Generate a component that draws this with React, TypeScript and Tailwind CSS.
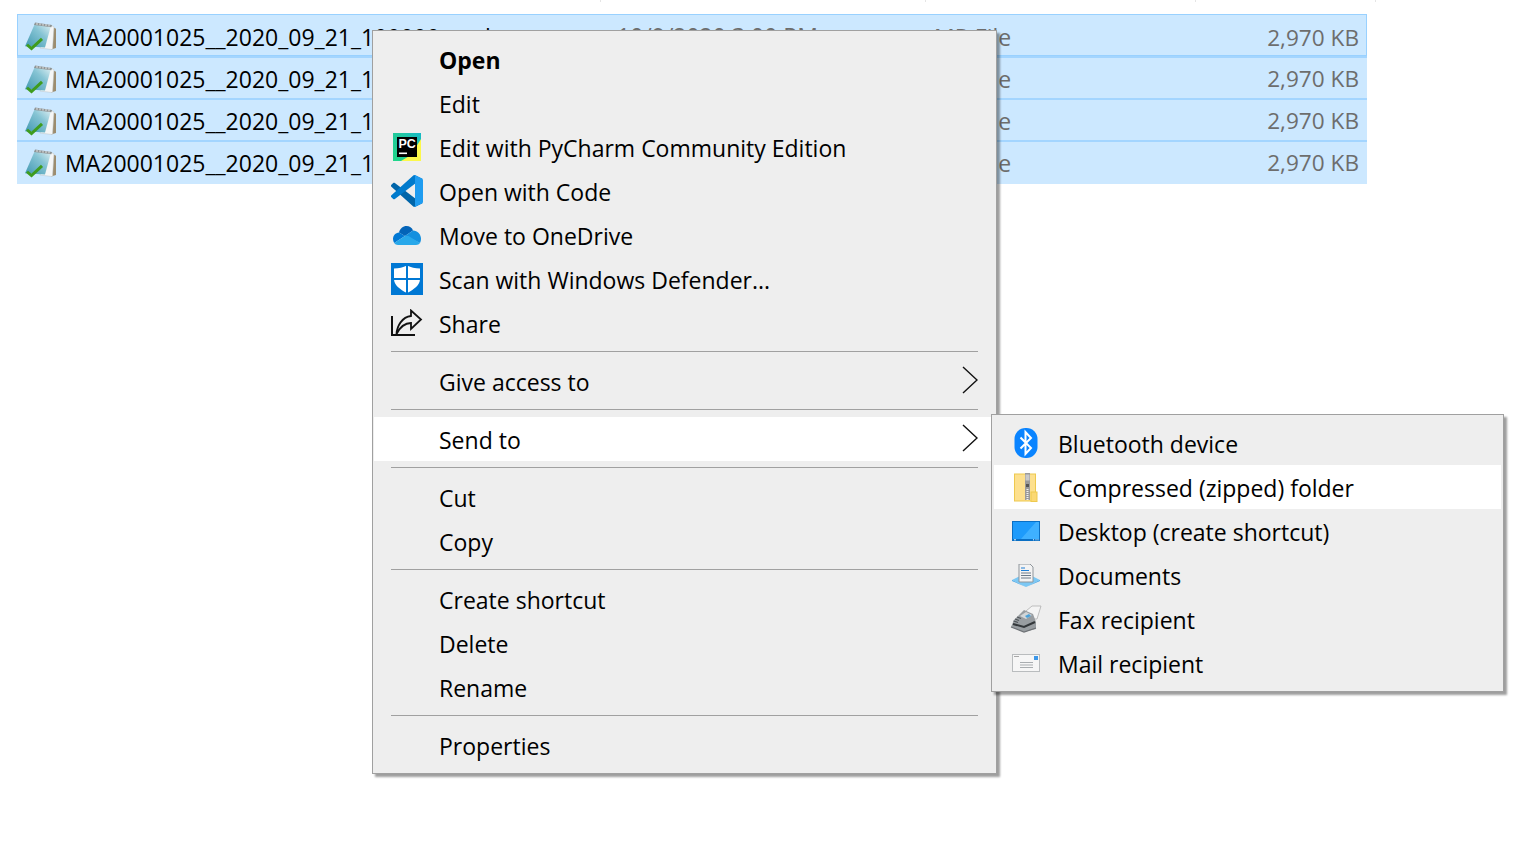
import React from 'react';

const font = { fontFamily: '"Open Sans", "Noto Sans", sans-serif' };

// Icons
const NotepadIcon = () => (
  <svg width="32" height="29" viewBox="0 0 32 30" preserveAspectRatio="none" className="shrink-0">
    <defs>
      <linearGradient id="npPage" x1="0" y1="1" x2="1" y2="0">
        <stop offset="0" stopColor="#3f97b0" />
        <stop offset="0.6" stopColor="#86c4d4" />
        <stop offset="1" stopColor="#e4f2f5" />
      </linearGradient>
    </defs>
    <path d="M27 5 L31 7 L31 27 L26 28.5 Z" fill="#9c8c6e" />
    <path d="M25 3 L29 5 L27.5 28.5 L15 27 Z" fill="#f5f6f6" stroke="#bcc3c6" strokeWidth="0.5" />
    <path d="M10 1.5 L26 3.5 L20 26.5 L0 25 Z" fill="url(#npPage)" />
    <path d="M10 0.5 L27 3 L26.4 5.5 L9 3 Z" fill="#8f9596" />
    <path d="M12 1 V3 M15 1.4 V3.4 M18 1.8 V3.8 M21 2.2 V4.2 M24 2.6 V4.6" stroke="#f0f0f0" strokeWidth="0.9" />
    <path d="M2 23.5 L6.5 27.5 L17 17.5" fill="none" stroke="#3f9c1e" strokeWidth="3" />
  </svg>
);

const PyCharmIcon = () => (
  <svg width="28" height="28" viewBox="0 0 28 28">
    <defs>
      <linearGradient id="pcBg" x1="0" y1="1" x2="1" y2="0">
        <stop offset="0" stopColor="#21d789" />
        <stop offset="0.6" stopColor="#21c8a0" />
        <stop offset="1" stopColor="#15b8c8" />
      </linearGradient>
    </defs>
    <rect width="28" height="28" fill="url(#pcBg)" />
    <path d="M28 6 V28 H8 L18 22 Z" fill="#fcf84a" />
    <rect x="4" y="4" width="20" height="20" fill="#000" />
    <text x="5.5" y="15" fontSize="12.5" fontWeight="700" fill="#fff" style={{ fontFamily: '"Liberation Sans", sans-serif' }}>PC</text>
    <rect x="6" y="19.5" width="8" height="1.6" fill="#fff" />
  </svg>
);

const VsCodeIcon = () => (
  <svg width="32" height="32" viewBox="0 0 100 100">
    <path d="M96.46 89.2 75.86 99.12C73.47 100.27 70.62 99.78 68.75 97.91L1.3 36.41C-.52 34.75-.52 31.9 1.3 30.25L6.81 25.24C8.3 23.89 10.53 23.79 12.13 25L93.35 86.68C96.07 88.75 100 86.81 100 83.39V83.63C100 86.03 98.62 88.22 96.46 89.2Z" fill="#0065a9" />
    <path d="M96.46 10.8 75.86.88C73.47-.27 70.62.22 68.75 2.09L1.3 63.59C-.52 65.25-.52 68.1 1.3 69.75L6.81 74.76C8.3 76.11 10.53 76.21 12.13 75L93.35 13.32C96.07 11.25 100 13.19 100 16.61V16.37C100 13.97 98.62 11.78 96.46 10.8Z" fill="#007acc" />
    <path d="M75.86 99.13C73.47 100.28 70.62 99.79 68.75 97.92 71.06 100.22 75 98.59 75 95.33V4.67C75 1.41 71.06-.22 68.75 2.09 70.62.21 73.47-.27 75.86.88L96.46 10.78C98.62 11.82 100 14.01 100 16.41V83.59C100 85.99 98.62 88.18 96.46 89.22Z" fill="#1f9cf0" />
  </svg>
);

const OneDriveIcon = () => (
  <svg width="28" height="19" viewBox="0 0 28 19">
    <path d="M6 6.5 C7 2.5 10 0 13.5 0 C16.5 0 19 1.7 20 4.5 L12 10 Z" fill="#0364b8" />
    <path d="M6 6.5 C2.5 6.8 0 9.5 0 13 C0 14.5 .5 15.8 1.2 17 L12 10 Z" fill="#0078d4" />
    <path d="M20 4.5 C24.5 4.8 28 8.2 28 13 C28 14.5 27.6 15.7 27 17 L12 10 Z" fill="#1490df" />
    <path d="M1.2 17 C2 18.2 3.3 19 5 19 H23 C24.8 19 26.2 18.2 27 17 L15.5 10 L12 10 Z" fill="#28a8ea" />
  </svg>
);

const DefenderIcon = () => (
  <svg width="32" height="32" viewBox="0 0 32 32">
    <rect width="32" height="32" fill="#0078d4" />
    <path d="M16 2.5 C20 4.5 24 5.5 29 5.5 V16 C29 22 23 26.5 16 30 C9 26.5 3 22 3 16 V5.5 C8 5.5 12 4.5 16 2.5 Z" fill="#fff" />
    <path d="M16 2 V30 M3 16 H29" stroke="#0078d4" strokeWidth="2" />
  </svg>
);

const ShareIcon = () => (
  <svg width="32" height="28" viewBox="0 0 32 28" fill="none" stroke="#111" strokeWidth="1.8">
    <path d="M1 7 V26 H24" strokeWidth="2" />
    <path d="M5.5 25 C6 17 11 8 20 7 V1.5 L30 10.5 L20 20 V14 C14 14 9 18 5.5 25 Z" />
  </svg>
);

const BluetoothIcon = () => (
  <svg width="24" height="30" viewBox="0 0 24 30">
    <rect x="0.5" width="23" height="30" rx="11" fill="#0a84ff" />
    <path d="M6.5 9.5 L17 20 L11.5 26 V4 L17 10 L6.5 20.5" fill="none" stroke="#fff" strokeWidth="2" />
  </svg>
);

const ZipIcon = () => (
  <svg width="24" height="29" viewBox="0 0 24 29">
    <rect x="0.5" y="1" width="21" height="27" fill="#fde08e" stroke="#eec94f" />
    <rect x="17" y="19" width="6" height="9.5" fill="#fbd873" stroke="#eec94f" />
    <rect x="11" y="0" width="5" height="27" fill="#9a9a9a" />
    <path d="M13.5 16 V27" stroke="#f0f0f0" strokeWidth="2" strokeDasharray="1 1" />
    <rect x="11.5" y="1.5" width="4" height="6" fill="#c9c9c9" />
    <rect x="12" y="11" width="3" height="3" fill="#555" />
  </svg>
);

const DesktopIcon = () => (
  <svg width="28" height="20" viewBox="0 0 28 20">
    <rect width="28" height="20" fill="#0a6fc4" />
    <rect x="1" y="1" width="26" height="17" fill="#1e9bfb" />
    <path d="M9 18 L24 1 H27 V18 Z" fill="#3fb0ff" />
    <path d="M2 18.8 H4 M21 18.8 H22 M23.5 18.8 H24.5 M25.5 18.8 H26.5" stroke="#e8f4ff" strokeWidth="1" />
  </svg>
);

const DocumentsIcon = () => (
  <svg width="28" height="23" viewBox="0 0 28 23">
    <path d="M0 16 L14 9 L28 16 L14 23 Z" fill="#7cc8f4" />
    <path d="M0 16 L14 23 L28 16 L28 17 L14 23 L0 17 Z" fill="#3da2e6" />
    <path d="M7 0 H18 L21 3 V18 H7 Z" fill="#f3f3f3" stroke="#8e959b" />
    <path d="M9 4 H13 M9 6.5 H17" stroke="#1e7fd6" strokeWidth="1.2" />
    <path d="M9 9 H19 M9 11.5 H19 M9 14 H19" stroke="#6c7a88" strokeWidth="1" />
  </svg>
);

const FaxIcon = () => (
  <svg width="32" height="28" viewBox="0 0 32 28">
    <path d="M16 6 L22 1 L31 1 L27 14 L20 14 Z" fill="#f4f4f4" stroke="#a8a8a8" strokeWidth="0.7" />
    <path d="M4 15 L14 5 L23 9 L26 17 L26 24 L14 27 L1 22 Z" fill="#989da1" />
    <path d="M10 11 L16 7 L22 10 L16 14 Z" fill="#d2d6d8" />
    <path d="M15 11 L19 9 L21 11 L17 13 Z" fill="#4aa0d8" />
    <path d="M3 19 L14 22 L25 17" fill="none" stroke="#33373a" strokeWidth="2" />
    <path d="M1 22 L14 27 L26 23" fill="none" stroke="#6d7175" strokeWidth="1.2" />
    <path d="M5 14 L9 15.5 M7 12 L11 13.5 M3.5 16 L8 17.5" stroke="#4f5458" strokeWidth="1.2" />
  </svg>
);

const MailIcon = () => (
  <svg width="28" height="18" viewBox="0 0 28 18">
    <rect x="0.5" y="0.5" width="27" height="17" fill="#f6f6f6" stroke="#b9bcbe" />
    <rect x="22" y="2" width="4" height="4" fill="#3c97e8" />
    <path d="M2 2.5 H7" stroke="#a8a8a8" />
    <path d="M8 8.5 H21 M8 11 H21 M8 13.5 H21" stroke="#a9adb0" />
  </svg>
);

const Chevron = () => (
  <svg width="16" height="28" viewBox="0 0 16 28" fill="none" stroke="#111" strokeWidth="1.4" className="-mt-[2px]">
    <path d="M1 1 L15 14 L1 27" />
  </svg>
);

// Data
const files = [
  { name: 'MA20001025__2020_09_21_100000.mrd', date: '10/9/2020 3:00 PM', type: 'MR File' },
  { name: 'MA20001025__2020_09_21_110000.mrd', date: '10/9/2020 3:00 PM', type: 'MR File' },
  { name: 'MA20001025__2020_09_21_120000.mrd', date: '10/9/2020 3:00 PM', type: 'MR File' },
  { name: 'MA20001025__2020_09_21_130000.mrd', date: '10/9/2020 3:00 PM', type: 'MR File' },
];

const rowStyles = [
  'h-[42px] border border-[#99d1ff] pl-[7px] pr-[7px] pt-[3px]',
  'h-[42px] border-t-[2px] border-[#a3d5ff] pl-[8px] pr-2 pt-[2px]',
  'h-[42px] border-t-[2px] border-[#a3d5ff] pl-[8px] pr-2 pt-[2px]',
  'h-[44px] border-t-[2px] border-[#a3d5ff] pl-[8px] pr-2 py-[2px]',
];

const sendTo = [
  { label: 'Bluetooth device', icon: <BluetoothIcon /> },
  { label: 'Compressed (zipped) folder', icon: <ZipIcon />, active: true },
  { label: 'Desktop (create shortcut)', icon: <DesktopIcon /> },
  { label: 'Documents', icon: <DocumentsIcon /> },
  { label: 'Fax recipient', icon: <FaxIcon /> },
  { label: 'Mail recipient', icon: <MailIcon /> },
];

const Separator = () => (
  <div className="ml-[17px] mr-[18px] mt-[6px] mb-[7px] h-px bg-[#a0a0a0]" />
);

type RowProps = {
  label: string;
  icon?: React.ReactNode;
  bold?: boolean;
  active?: boolean;
  arrow?: boolean;
  sub?: boolean;
};

const MenuRow = ({ label, icon, bold, active, arrow, sub }: RowProps) => (
  <div className={`flex h-11 items-center pr-[18px] ${sub ? 'pl-[16px]' : 'pl-[17px]'} ${active ? 'bg-white' : ''}`}>
    <div className="flex w-8 shrink-0 items-center justify-center">{icon}</div>
    <span className={`ml-4 flex-1 pt-[2px] text-[23px] leading-8 text-black ${bold ? 'font-bold' : ''}`}>{label}</span>
    {arrow && <Chevron />}
  </div>
);

export default function App() {
  return (
    <div className="relative h-[857px] w-[1535px] overflow-hidden bg-white" style={font}>
      {/* Column ticks of the hidden header */}
      <div className="flex h-[2px] pl-[600px]">
        <div className="w-[325px] border-l border-[#e5e5e5]" />
        <div className="w-[270px] border-l border-[#e5e5e5]" />
        <div className="w-[180px] border-l border-[#e5e5e5]" />
        <div className="border-l border-[#e5e5e5]" />
      </div>

      {/* File list */}
      <div className="ml-[17px] mt-[12px] w-[1350px] bg-[#cce8ff]">
        {files.map((file, index) => (
          <div key={file.name} className={`flex items-center text-[23px] ${rowStyles[index]}`}>
            <NotepadIcon />
            <span className={`ml-[8px] w-[552px] shrink-0 whitespace-nowrap text-black ${index === 0 ? 'pt-[2px]' : ''}`}>{file.name}</span>
            <span className="w-[317px] shrink-0 whitespace-nowrap text-[#6d6d6d]">{file.date}</span>
            <span className={`whitespace-nowrap text-[#6d6d6d] ${index === 0 ? 'pt-[2px]' : ''}`}>{file.type}</span>
            <span className={`ml-auto whitespace-nowrap text-[22.6px] text-[#6d6d6d] ${index === 0 ? 'pt-[2px]' : ''}`}>2,970 KB</span>
          </div>
        ))}
      </div>

      {/* Context menu */}
      <div className="absolute left-[372px] top-[30px] w-[625px] border border-[#a0a0a0] bg-[#eeeeee] py-[6px] pl-px shadow-[3px_3px_2px_rgba(0,0,0,0.38)]">
        <MenuRow label="Open" bold />
        <MenuRow label="Edit" />
        <MenuRow label="Edit with PyCharm Community Edition" icon={<PyCharmIcon />} />
        <MenuRow label="Open with Code" icon={<VsCodeIcon />} />
        <MenuRow label="Move to OneDrive" icon={<OneDriveIcon />} />
        <MenuRow label="Scan with Windows Defender..." icon={<DefenderIcon />} />
        <MenuRow label="Share" icon={<ShareIcon />} />
        <Separator />
        <MenuRow label="Give access to" arrow />
        <Separator />
        <MenuRow label="Send to" arrow active />
        <Separator />
        <MenuRow label="Cut" />
        <MenuRow label="Copy" />
        <Separator />
        <MenuRow label="Create shortcut" />
        <MenuRow label="Delete" />
        <MenuRow label="Rename" />
        <Separator />
        <MenuRow label="Properties" />
      </div>

      {/* Send to submenu */}
      <div className="absolute left-[991px] top-[414px] w-[513px] border border-[#a0a0a0] bg-[#eeeeee] px-[2px] py-[6px] shadow-[3px_3px_2px_rgba(0,0,0,0.38)]">
        {sendTo.map((item) => (
          <MenuRow key={item.label} label={item.label} icon={item.icon} active={item.active} sub />
        ))}
      </div>
    </div>
  );
}
